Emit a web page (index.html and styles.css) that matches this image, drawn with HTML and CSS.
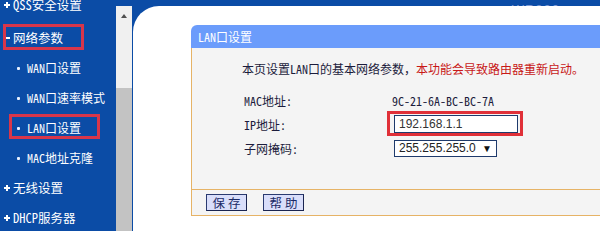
FILE: index.html
```html
<!DOCTYPE html>
<html lang="zh-CN">
<head>
<meta charset="utf-8">
<title>LAN口设置</title>
<link rel="stylesheet" href="styles.css">
</head>
<body>
<div class="page">
  <nav class="side">
    <ul class="menu">
      <li class="grp first"><span class="mk plus"></span>QSS安全设置</li>
      <li class="grp mark-a"><span class="mk dash"></span>网络参数</li>
      <li class="sub"><span class="dot"></span>WAN口设置</li>
      <li class="sub"><span class="dot"></span>WAN口速率模式</li>
      <li class="sub mark-b"><span class="dot"></span>LAN口设置</li>
      <li class="sub"><span class="dot"></span>MAC地址克隆</li>
      <li class="grp"><span class="mk plus"></span>无线设置</li>
      <li class="grp"><span class="mk plus"></span>DHCP服务器</li>
    </ul>
  </nav>
  <div class="right">
    <div class="band"><span class="bandtext">WR820</span></div>
    <div class="row">
      <div class="scroll">
        <div class="track"><span class="arrow"></span></div>
        <div class="thumb"></div>
      </div>
      <div class="main">
        <div class="sheet">
          <section class="panel">
            <header class="ph">LAN口设置</header>
            <div class="pb">
              <p class="intro">本页设置LAN口的基本网络参数，<span class="warn">本功能会导致路由器重新启动。</span></p>
              <div class="form">
                <span class="lbl">MAC地址:</span><span class="val mac">9C-21-6A-BC-BC-7A</span>
                <span class="lbl">IP地址:</span><span class="val"><span class="hl"><input class="ip" type="text" value="192.168.1.1"></span></span>
                <span class="lbl">子网掩码:</span><span class="val"><span class="sel">255.255.255.0<span class="caret">▼</span></span></span>
              </div>
            </div>
            <div class="pf"><button class="btn">保 存</button><button class="btn">帮 助</button></div>
          </section>
        </div>
      </div>
    </div>
  </div>
</div>
</body>
</html>
```
FILE: styles.css
```css
html, body {
  margin: 0;
  padding: 0;
  width: 600px;
  height: 231px;
  overflow: hidden;
  background: #ffffff;
}
.page {
  display: flex;
  width: 600px;
  height: 231px;
  font-family: "Noto Sans Mono CJK SC", "Noto Sans CJK SC", sans-serif;
  font-size: 12px;
}
.side {
  width: 116px;
  flex: none;
  background: #0b4ca6;
  color: #ffffff;
  overflow: hidden;
}
.menu {
  list-style: none;
  margin: -7px 0 0 0;
  padding: 0;
}
.menu li {
  position: relative;
  height: 30px;
  display: flex;
  align-items: center;
  white-space: nowrap;
  line-height: 14px;
}
.menu li.first {
  height: 24px;
  padding-bottom: 6px;
}
.grp { padding-left: 4px; font-size: 12.5px; }
.sub { padding-left: 17px; }
.mk {
  display: inline-block;
  width: 6px;
  height: 6px;
  margin-right: 3px;
  flex: none;
}
.plus {
  background:
    linear-gradient(#ffffff, #ffffff) center / 6px 2px no-repeat,
    linear-gradient(#ffffff, #ffffff) center / 2px 6px no-repeat;
}
.dash {
  background: linear-gradient(#ffffff, #ffffff) center / 5px 2px no-repeat;
}
.dot {
  display: inline-block;
  width: 3px;
  height: 3px;
  background: #e8f0ff;
  border-radius: 1px;
  margin-right: 7px;
  flex: none;
}
.mark-a::after,
.mark-b::after {
  content: "";
  position: absolute;
  border: 3px solid #d8364a;
  box-sizing: border-box;
}
.mark-a::after { left: 3px; top: 1px; width: 81px; height: 26px; }
.mark-b::after { left: 9px; top: 1px; width: 91px; height: 25px; }

.right {
  flex: 1;
  display: flex;
  flex-direction: column;
  min-width: 0;
}
.band {
  height: 6px;
  background: #0b4ca6;
  overflow: hidden;
  text-align: right;
  padding-right: 40px;
}
.bandtext {
  display: inline-block;
  margin-top: -9px;
  font-family: "Liberation Sans", sans-serif;
  font-size: 13px;
  line-height: 14px;
  color: #7d9ad6;
  letter-spacing: 1px;
}
.row {
  flex: 1;
  display: flex;
  min-height: 0;
}
.scroll {
  width: 16px;
  flex: none;
  display: flex;
  flex-direction: column;
}
.track {
  height: 82px;
  background: #f0f0f0;
  display: flex;
  justify-content: center;
  padding-top: 8px;
  box-sizing: border-box;
}
.arrow {
  width: 0;
  height: 0;
  border-left: 3.5px solid transparent;
  border-right: 3.5px solid transparent;
  border-bottom: 4px solid #505050;
}
.thumb {
  flex: 1;
  background: #c3c3c3;
}
.main {
  flex: 1;
  background: #0b4ca6;
  padding-left: 1px;
  overflow: hidden;
  min-width: 0;
}
.sheet {
  height: 100%;
  background: #ffffff;
  border-top-left-radius: 26px;
  padding: 19px 0 0 58px;
  box-sizing: border-box;
}
.panel {
  width: 520px;
}
.ph {
  height: 23px;
  background: #6b9cfb;
  border-top-left-radius: 6px;
  color: #ffffff;
  line-height: 23px;
  padding-left: 7px;
}
.pb {
  height: 141px;
  background: #f4f4f4;
  border-left: 1px solid #e6b366;
  border-bottom: 1px solid #e6b366;
  overflow: hidden;
}
.intro {
  margin: 13px 0 0 0;
  padding-left: 50px;
  line-height: 16px;
  color: #1c1c3c;
  white-space: nowrap;
}
.warn { color: #c81818; }
.form {
  display: grid;
  grid-template-columns: 148px auto;
  grid-auto-rows: 24px;
  margin-top: 11px;
  padding-left: 52px;
  align-items: center;
  color: #1c1c3c;
}
.val { display: flex; align-items: center; }
.hl {
  position: relative;
  display: inline-block;
  margin-left: 2px;
}
.hl::after {
  content: "";
  position: absolute;
  left: -7px;
  right: -5px;
  top: -4px;
  bottom: -3px;
  border: 3px solid #e03038;
}
.ip {
  display: block;
  box-sizing: border-box;
  width: 124px;
  height: 18px;
  margin: 0;
  padding: 0 0 0 4px;
  border: 1px solid #1e3a6c;
  background: #ffffff;
  font-family: "Liberation Sans", Arial, sans-serif;
  font-size: 12px;
  color: #333333;
  outline: none;
}
.sel {
  display: flex;
  align-items: center;
  box-sizing: border-box;
  width: 103px;
  height: 17px;
  margin-left: 2px;
  padding: 0 4px 0 4px;
  border: 1px solid #1e3a6c;
  background: #ffffff;
  font-family: "Liberation Sans", Arial, sans-serif;
  font-size: 12px;
  color: #222222;
}
.caret {
  font-size: 10px;
  margin-left: auto;
  color: #111111;
}
.pf {
  height: 25px;
  border-left: 1px solid #e6b366;
  border-bottom: 1px solid #e6b366;
  background: #f4f4f4;
  display: flex;
  align-items: center;
  gap: 16px;
  padding-left: 14px;
}
.btn {
  width: 41px;
  height: 17px;
  margin: 0;
  padding: 0;
  border: 1px solid #2a3a70;
  border-right-color: #1a2450;
  border-bottom-color: #1a2450;
  background: #d9defa;
  color: #1a2a66;
  font-family: "Noto Sans CJK SC", sans-serif;
  font-size: 12.5px;
  line-height: 15px;
}
```
